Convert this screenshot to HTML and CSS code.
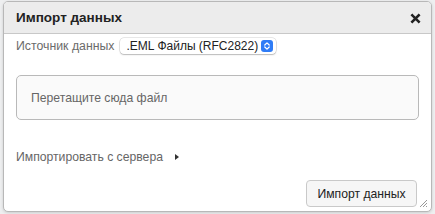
FILE: index.html
```html
<!DOCTYPE html>
<html lang="ru">
<head>
<meta charset="utf-8">
<link rel="stylesheet" href="styles.css">
</head>
<body>
<div class="dialog">
  <div class="header">
    <span class="title">Импорт данных</span>
    <span class="close">
      <svg width="11" height="11" viewBox="0 0 11 11"><path d="M2.3 2.3 L8.7 8.7 M8.7 2.3 L2.3 8.7" stroke="#222" stroke-width="2.6" stroke-linecap="square"/></svg>
    </span>
  </div>
  <div class="body">
    <div class="source-row">
      <span class="label">Источник данных</span>
      <div class="select">
        <span class="select-text">.EML Файлы (RFC2822)</span>
        <span class="stepper">
          <svg width="12" height="12" viewBox="0 0 12 12"><path d="M3.8 5 L6 2.9 L8.2 5 M3.8 7 L6 9.1 L8.2 7" fill="none" stroke="#fff" stroke-width="1.3" stroke-linecap="round" stroke-linejoin="round"/></svg>
        </span>
      </div>
    </div>
    <div class="dropzone">Перетащите сюда файл</div>
    <div class="server">
      <span>Импортировать с сервера</span>
      <span class="tri"></span>
    </div>
    <div class="footer">
      <button class="btn">Импорт данных</button>
    </div>
  </div>
  <svg class="grip" width="9" height="9" viewBox="0 0 9 9"><path d="M1 8 L8 1 M4 8 L8 4 M7 8 L8 7" stroke="#999" stroke-width="1"/></svg>
</div>
</body>
</html>
```

FILE: styles.css
```css
html, body {
  margin: 0;
  padding: 0;
}
body {
  background: #eeeff0;
  width: 435px;
  height: 214px;
  overflow: hidden;
  font-family: "Liberation Sans", Arial, sans-serif;
}
.dialog {
  position: relative;
  margin: 1px 0 0 3px;
  width: 427px;
  height: 209px;
  border: 1px solid #b8b8b8;
  border-radius: 5px;
  background: #fff;
  box-shadow: 0 1px 3px rgba(0,0,0,0.15);
  display: flex;
  flex-direction: column;
  overflow: hidden;
}
.header {
  height: 31px;
  flex: none;
  background: #ececec;
  border-bottom: 1px solid #c8c8c8;
  display: flex;
  align-items: center;
  justify-content: space-between;
  padding: 0 10px 0 12px;
}
.title {
  font-size: 13.5px;
  font-weight: bold;
  color: #222;
}
.close {
  display: flex;
  margin-top: 1px;
}
.body {
  flex: 1;
  display: flex;
  flex-direction: column;
  padding: 0 12px 0 12px;
}
.source-row {
  display: flex;
  align-items: center;
  height: 24px;
}
.label {
  font-size: 12.3px;
  color: #6b6b6b;
  margin-right: 5px;
  white-space: nowrap;
}
.select {
  display: flex;
  align-items: center;
  justify-content: space-between;
  width: 156px;
  height: 16px;
  flex: none;
  box-sizing: border-box;
  padding: 0 3px 0 7px;
  background: #fff;
  border-radius: 4px;
  box-shadow: 0 0 0 0.5px rgba(0,0,0,0.18), 0 1px 1.5px rgba(0,0,0,0.2);
}
.select-text {
  font-size: 12px;
  color: #222;
  white-space: nowrap;
}
.stepper {
  width: 12px;
  height: 12px;
  border-radius: 3px;
  background: #2f7cf6;
  display: flex;
  flex: none;
}
.dropzone {
  margin-top: 17px;
  height: 43px;
  border: 1px solid #b9b9b9;
  border-radius: 5px;
  background: #fafafa;
  display: flex;
  align-items: center;
  padding-left: 14px;
  font-size: 12.2px;
  color: #666;
}
.server {
  margin-top: 29px;
  display: flex;
  align-items: center;
  font-size: 12.2px;
  color: #666;
  height: 16px;
}
.tri {
  margin-left: 12px;
  width: 0;
  height: 0;
  border-left: 4px solid #333;
  border-top: 3.5px solid transparent;
  border-bottom: 3.5px solid transparent;
}
.footer {
  display: flex;
  justify-content: flex-end;
  margin-top: 15px;
  padding-right: 2px;
}
.btn {
  width: 111px;
  height: 27px;
  border: 1px solid #c9c9c9;
  border-radius: 4px;
  background: #f6f6f6;
  font-family: "Liberation Sans", Arial, sans-serif;
  font-size: 12.2px;
  color: #222;
  padding: 0;
}
.grip {
  position: absolute;
  right: 3px;
  bottom: 3px;
}
```
